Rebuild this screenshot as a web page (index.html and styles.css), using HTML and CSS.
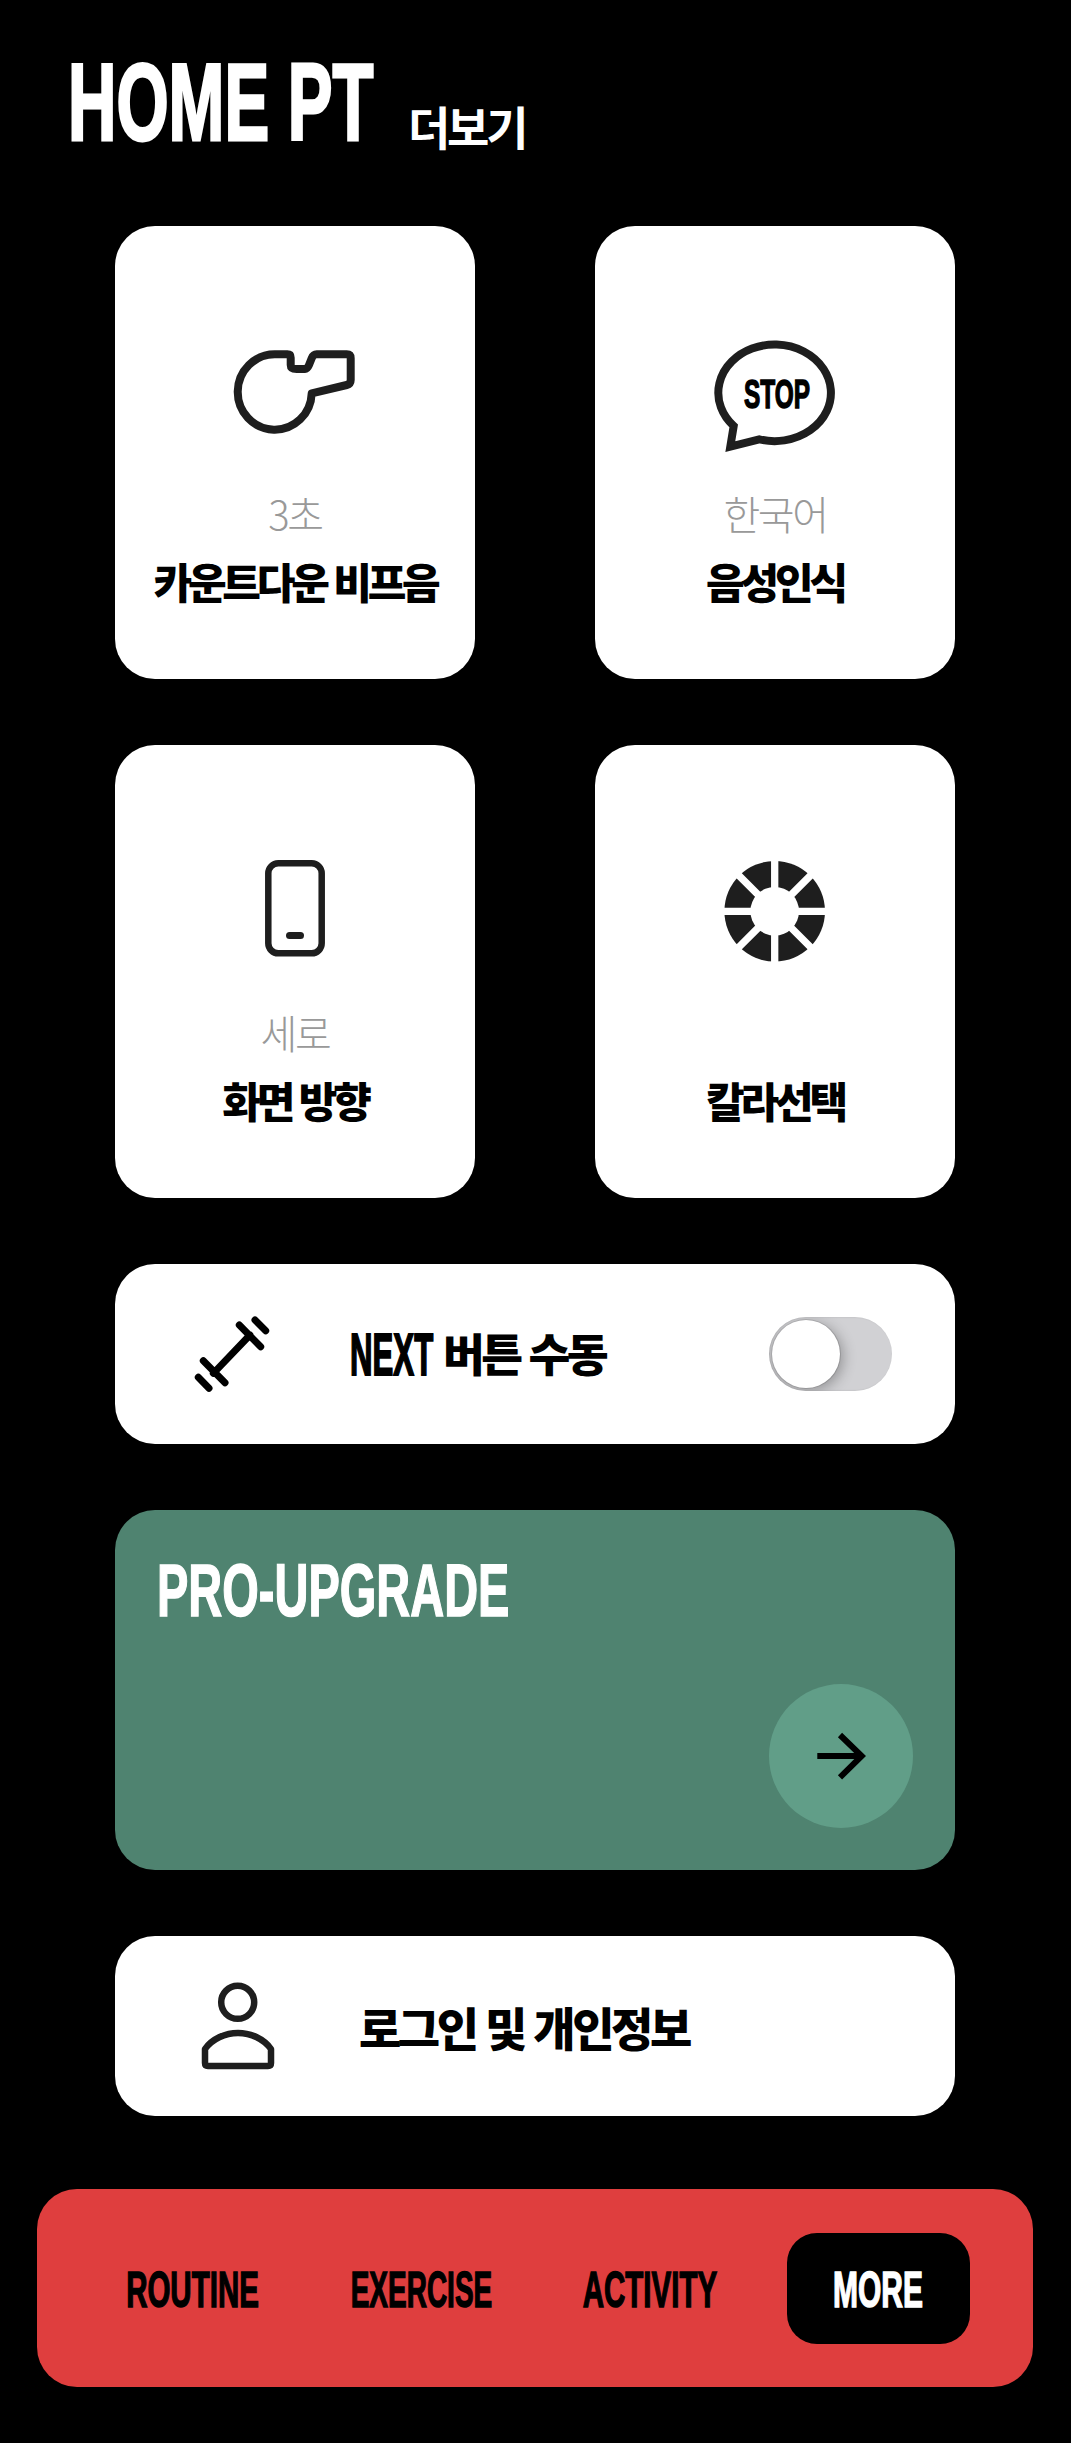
FILE: index.html
```html
<!DOCTYPE html>
<html lang="ko">
<head>
<meta charset="utf-8">
<title>HOME PT</title>
<link rel="stylesheet" href="styles.css">
</head>
<body>
<div class="page">
  <header class="header">
    <h1 class="brand"><span class="brand-text">HOME PT</span></h1>
    <span class="more-link">더보기</span>
  </header>
  <main class="content">
    <section class="grid">
      <div class="card">
        <svg class="icon" viewBox="235 332 120 120"><path class="line" d="M275 354.3H287.3Q290.7 354.3 290.7 357.7V365Q290.7 369 296.7 369H305Q307.3 369 309 365L311.7 358.3Q313.3 354.3 316.7 354.3H346.7Q350.7 354.3 350.7 358.3V380Q350.7 384 346.7 385L311.7 393.3A37 37.7 0 1 1 275 354.3Z"/></svg>
        <div class="label">3초</div>
        <div class="name">카운트다운 비프음</div>
      </div>
      <div class="card">
        <svg class="icon" viewBox="715 332 120 120"><path class="line miter" d="M733.7 426L730.3 446.7L759.3 439.3A56.3 48.3 0 1 0 733.7 426Z"/><text class="stop" x="744" y="408" textLength="66" lengthAdjust="spacingAndGlyphs">STOP</text></svg>
        <div class="label">한국어</div>
        <div class="name">음성인식</div>
      </div>
      <div class="card">
        <svg class="icon" viewBox="235 851 120 120"><rect class="line thin" x="268.3" y="863.3" width="53.4" height="90" rx="10"/><rect class="solid" x="286" y="932" width="18" height="7" rx="3.5"/></svg>
        <div class="label">세로</div>
        <div class="name">화면 방향</div>
      </div>
      <div class="card">
        <svg class="icon" viewBox="715 851 120 120"><circle class="solid" cx="774.7" cy="911.3" r="50.3"/><path class="cuts" d="M720 911.3H830M774.7 856V966M736 872.6L813.4 950M813.4 872.6L736 950"/><circle class="hole" cx="774.7" cy="911.3" r="24.3"/></svg>
        <div class="label">&nbsp;</div>
        <div class="name">칼라선택</div>
      </div>
    </section>
    <section class="row">
      <svg class="row-icon" viewBox="172 1294 120 120"><path class="bar" d="M213.3 1373.3L250 1335M239.3 1325L260.7 1346.7M255 1320L265.7 1330.7M203.3 1360.7L225 1382.7M198.3 1377.3L209 1388.3"/></svg>
      <div class="row-text"><span class="next"><span class="next-text">NEXT</span></span>버튼 수동</div>
      <div class="toggle"><span class="knob"></span></div>
    </section>
    <section class="promo">
      <h2 class="promo-title"><span class="promo-text">PRO-UPGRADE</span></h2>
      <div class="go">
        <svg class="go-icon" viewBox="811 1726 60 60"><path class="arrow" d="M817.3 1756H861.7M840 1735L861.7 1756L840 1777.3"/></svg>
      </div>
    </section>
    <section class="row">
      <svg class="row-icon" viewBox="172 1966 120 120"><circle class="line thin" cx="237.7" cy="2002.3" r="16.5"/><path class="line thin" d="M205 2049C212 2039 225 2033 238 2033S264 2039 271 2049V2063Q271 2066 268 2066H208Q205 2066 205 2063Z"/></svg>
      <div class="row-text login">로그인 및 개인정보</div>
    </section>
  </main>
  <nav class="nav">
    <div class="nav-item"><span class="nav-text">ROUTINE</span></div>
    <div class="nav-item"><span class="nav-text tight">EXERCISE</span></div>
    <div class="nav-item"><span class="nav-text">ACTIVITY</span></div>
    <div class="nav-item active"><span class="nav-text wide">MORE</span></div>
  </nav>
</div>
</body>
</html>
```
FILE: styles.css
```css
* { box-sizing: border-box; }
html, body { margin: 0; padding: 0; background: #000; }
body { font-family: "Noto Sans CJK KR", "Liberation Sans", sans-serif; }
.page { width: 1071px; height: 2443px; overflow: hidden; }

.header { height: 226px; padding: 48px 0 0 68px; display: flex; align-items: flex-start; gap: 33px; color: #fff; }
.brand { margin: 0; width: 307px; font: 700 109px/1 "Liberation Sans", sans-serif; white-space: nowrap; -webkit-text-stroke: 3px #fff; }
.brand-text { display: inline-block; transform: scaleX(0.615); transform-origin: left center; }
.more-link { margin-top: 54px; font-size: 46px; font-weight: 700; letter-spacing: -0.07em; line-height: 1; }

.content { padding: 0 116px 0 115px; display: flex; flex-direction: column; gap: 66px; }
.grid { display: grid; grid-template-columns: 360px 360px; column-gap: 120px; row-gap: 66px; }
.card { height: 453px; background: #fff; border-radius: 40px; padding-top: 106px; display: flex; flex-direction: column; align-items: center; text-align: center; }
.icon { width: 120px; height: 120px; flex: none; overflow: visible; }
.label { margin-top: 36px; height: 50px; line-height: 50px; font-size: 40px; font-weight: 300; color: #999; letter-spacing: -0.06em; }
.name { margin-top: 13px; height: 60px; line-height: 60px; font-size: 42px; font-weight: 900; color: #000; letter-spacing: -0.1em; white-space: nowrap; }

.line { fill: none; stroke: #1e1e1e; stroke-width: 8; stroke-linejoin: round; }
.thin { stroke-width: 6.5; }
.miter { stroke-linejoin: miter; }
.solid { fill: #1e1e1e; }
.hole { fill: #fff; }
.cuts { fill: none; stroke: #fff; stroke-width: 7.3; }
.bar { fill: none; stroke: #000; stroke-width: 7; stroke-linecap: round; }
.stop { font: 700 40px "Liberation Sans", sans-serif; fill: #000; stroke: #000; stroke-width: 1.5; }

.row { height: 180px; background: #fff; border-radius: 40px; padding: 0 63px 0 57px; display: flex; align-items: center; }
.row-icon { width: 120px; height: 120px; flex: none; overflow: visible; }
.row-text { margin: 0 0 5px 58px; font-size: 45.5px; font-weight: 900; letter-spacing: -0.08em; color: #000; white-space: nowrap; }
.row-text.login { margin: 0 0 0 67px; font-size: 46px; letter-spacing: -0.075em; }
.next { display: inline-block; width: 93px; font: 700 60px/1 "Liberation Sans", sans-serif; letter-spacing: 0; vertical-align: -3px; -webkit-text-stroke: 2px #000; }
.next-text { display: inline-block; transform: scaleX(0.52); transform-origin: left center; }
.toggle { margin-left: auto; width: 123px; height: 74px; border-radius: 37px; background: #d1d1d4; padding: 3px; overflow: hidden; box-shadow: inset 1px 0 2px rgba(0,0,0,.15); }
.knob { display: block; width: 68px; height: 68px; border-radius: 50%; background: #fff; box-shadow: 3px 3px 14px rgba(0,0,0,.3), 0 0 0 1px rgba(0,0,0,.12); }

.promo { height: 360px; background: #4f8370; border-radius: 40px; padding: 44px 42px 42px 42px; display: flex; flex-direction: column; justify-content: space-between; }
.promo-title { margin: 0; color: #fff; font: 700 74px/1 "Liberation Sans", sans-serif; white-space: nowrap; -webkit-text-stroke: 1.5px #fff; }
.promo-text { display: inline-block; transform: scaleX(0.635); transform-origin: left center; }
.go { align-self: flex-end; width: 144px; height: 144px; border-radius: 50%; background: #619e88; display: flex; align-items: center; justify-content: center; }
.go-icon { width: 60px; height: 60px; overflow: visible; }
.arrow { fill: none; stroke: #000; stroke-width: 6; }

.nav { margin: 73px 38px 0 37px; height: 198px; background: #df3e3e; border-radius: 40px; padding: 0 63px 0 64px; display: flex; align-items: center; justify-content: space-between; }
.nav-item { width: 183px; height: 111px; padding-top: 4px; border-radius: 30px; display: flex; align-items: center; justify-content: center; color: #000; font: 700 50px/1 "Liberation Sans", sans-serif; white-space: nowrap; -webkit-text-stroke: 1.5px #000; }
.nav-item.active { background: #000; color: #fff; -webkit-text-stroke-color: #fff; }
.nav-text { display: inline-block; flex: none; transform: scaleX(0.59); }
.nav-text.tight { transform: scaleX(0.56); }
.nav-text.wide { transform: scaleX(0.6); }
```
